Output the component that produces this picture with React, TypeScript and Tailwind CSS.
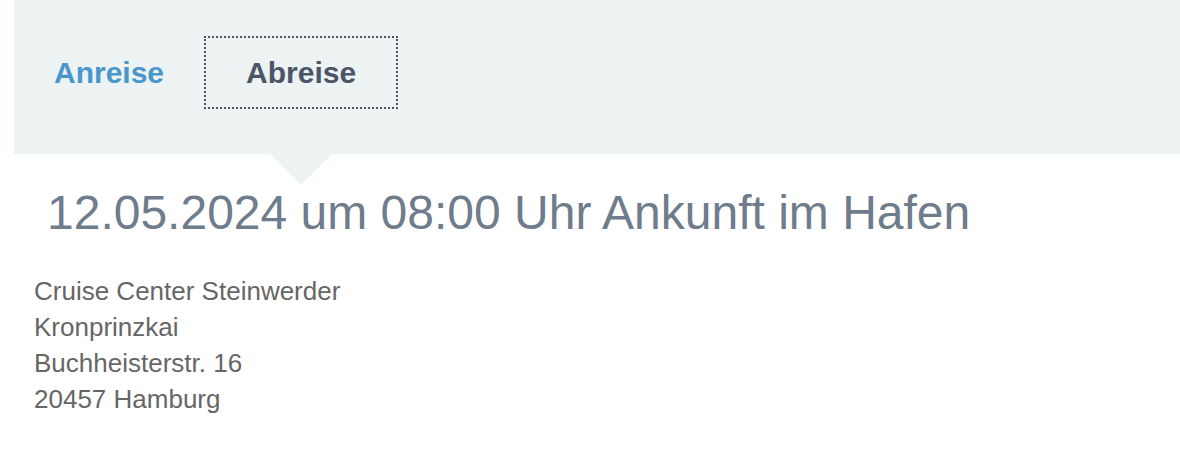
import React from 'react';

const tabs = ['Anreise', 'Abreise'];

export default function App() {
  const active = 1;

  return (
    <div className="min-h-[464px] bg-white pl-[14px] font-['Liberation_Sans',Arial,sans-serif]">
      <div className="h-[154px] bg-[#edf2f3] pt-[36px]">
        <div className="flex">
          {tabs.map((tab, i) => (
            <div
              key={tab}
              className={
                i === active
                  ? 'relative flex h-[73px] items-center border-2 border-dotted border-[#4b5567] px-[40px] text-[30px] font-bold text-[#4b5567]'
                  : 'flex h-[73px] items-center px-[40px] text-[30px] font-bold text-[#4a98cb]'
              }
            >
              {tab}
              {i === active && (
                <span className="absolute left-1/2 top-[116px] h-0 w-0 -translate-x-1/2 border-x-[31px] border-t-[31px] border-x-transparent border-t-[#edf2f3]" />
              )}
            </div>
          ))}
        </div>
      </div>

      <h1 className="mt-[31px] pl-[33px] text-[48px] leading-[55px] font-normal text-[#6e7c8c]">
        12.05.2024 um 08:00 Uhr Ankunft im Hafen
      </h1>

      <div className="mt-[33px] pl-[20px] text-[26px] leading-[36px] text-[#666666]">
        <p>Cruise Center Steinwerder</p>
        <p>Kronprinzkai</p>
        <p>Buchheisterstr. 16</p>
        <p>20457 Hamburg</p>
      </div>
    </div>
  );
}
